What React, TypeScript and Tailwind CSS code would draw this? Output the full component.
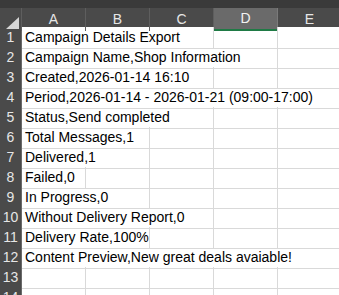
import React from "react";

const columns = ["A", "B", "C", "D", "E"];

const rows: { text: string; span: number }[] = [
  { text: "Campaign Details Export", span: 3 },
  { text: "Campaign Name,Shop Information", span: 4 },
  { text: "Created,2026-01-14 16:10", span: 3 },
  { text: "Period,2026-01-14 - 2026-01-21 (09:00-17:00)", span: 5 },
  { text: "Status,Send completed", span: 3 },
  { text: "Total Messages,1", span: 2 },
  { text: "Delivered,1", span: 2 },
  { text: "Failed,0", span: 1 },
  { text: "In Progress,0", span: 2 },
  { text: "Without Delivery Report,0", span: 3 },
  { text: "Delivery Rate,100%", span: 2 },
  { text: "Content Preview,New great deals avaiable!", span: 5 },
  { text: "", span: 1 },
  { text: "", span: 1 },
];

const spanClass: Record<number, string> = {
  1: "col-span-1",
  2: "col-span-2",
  3: "col-span-3",
  4: "col-span-4",
  5: "col-span-5",
};

export default function App() {
  return (
    <div
      className="w-[339px] h-[295px] overflow-hidden bg-white"
      style={{ fontFamily: '"Liberation Sans", Arial, sans-serif' }}
    >
      {/* toolbar strip */}
      <div className="h-[8px] bg-[#3a3a3a]" />

      {/* column header */}
      <div className="grid grid-cols-[22px_repeat(5,64px)] h-[19px] bg-[#4a4a4a]">
        <div className="relative border-r border-[#5e5e5e]">
          <div className="absolute right-[2px] bottom-[2px] w-0 h-0 border-l-[13px] border-l-transparent border-b-[12px] border-b-[#d6d6d6]" />
        </div>
        {columns.map((c) =>
          c === "D" ? (
            <div
              key={c}
              className="flex items-center justify-center bg-[#6a6a6a] border-r border-[#7a7a7a] border-b-2 border-b-[#1f7a45] text-[14px] text-[#f2f2f2]"
            >
              {c}
            </div>
          ) : (
            <div
              key={c}
              className="flex items-center justify-center border-r border-[#5e5e5e] text-[14px] text-[#e6e6e6]"
            >
              {c}
            </div>
          )
        )}
      </div>

      {/* sheet rows */}
      {rows.map((row, i) => (
        <div key={i} className="grid grid-cols-[22px_repeat(5,64px)] h-[20px]">
          <div className="flex items-center justify-center bg-[#4a4a4a] border-b border-[#3a3a3a] border-r border-r-[#6a6a6a] text-[14px] text-[#e6e6e6]">
            {i + 1}
          </div>
          <div
            className={`${spanClass[row.span]} flex items-center pl-[3px] border-r border-b border-[#d9d9d9] whitespace-nowrap text-[14px] text-black`}
          >
            {row.text}
          </div>
          {Array.from({ length: 5 - row.span }).map((_, j) => (
            <div key={j} className="border-r border-b border-[#d9d9d9]" />
          ))}
        </div>
      ))}
    </div>
  );
}
